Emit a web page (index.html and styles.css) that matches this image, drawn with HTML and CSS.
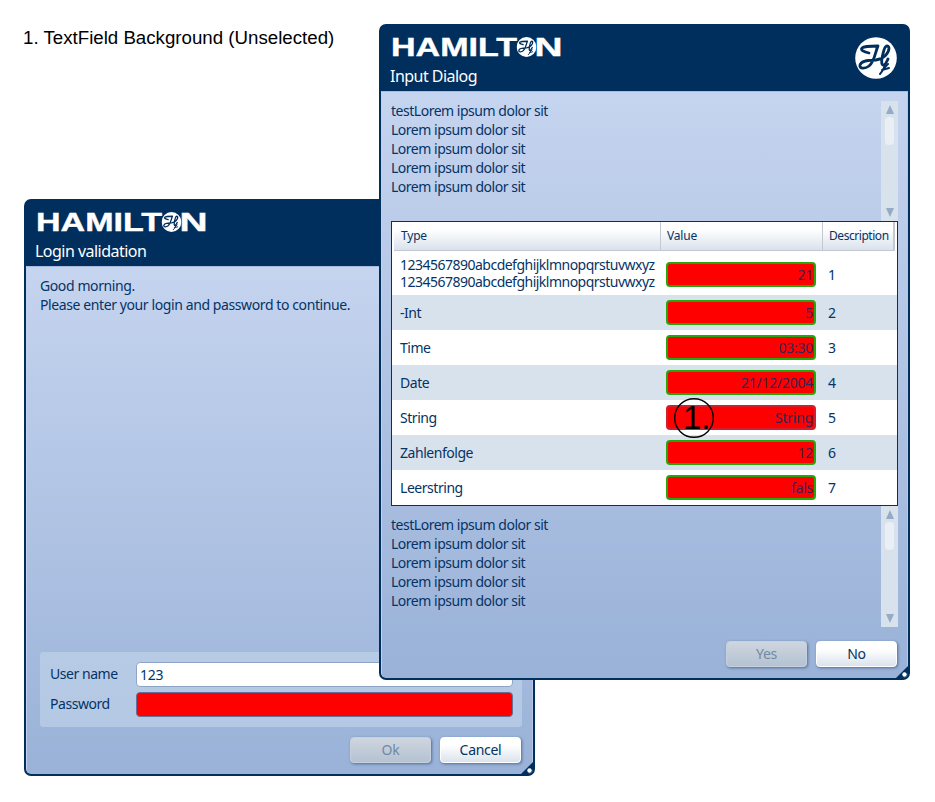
FILE: index.html
```html
<!DOCTYPE html>
<html lang="en">
<head>
<meta charset="utf-8">
<title>TextField Background</title>
<link rel="stylesheet" href="styles.css">
</head>
<body>
<svg class="defs" width="0" height="0" aria-hidden="true">
  <symbol id="emblem" viewBox="0 0 42 42">
    <circle cx="21" cy="21" r="20.8" fill="#fff"/>
    <g fill="none" stroke="#002e5d" stroke-width="2.8" stroke-linecap="round" stroke-linejoin="round">
      <path d="M14 16C9 15 5 13 7 11C9 9 15 9 23 9C20 15 20 24 14 29C10 32 4 32 5 28C6 24 15 23 21 23C29 22 34 16 34 11C33 7 30 9 29 13C27 20 25 29 29 28C31 27 32 24 33 22"/>
      <path d="M25 37C28 34 29 31 30 28M27 33L34 31M29 31L33 27" stroke-width="2"/>
    </g>
  </symbol>
</svg>
<h1 class="caption">1. TextField Background (Unselected)</h1>

<section class="dialog login">
  <header class="head">
    <svg class="logo" width="172" height="20" viewBox="0 0 172 20">
      <text x="-1" y="18.500" textLength="126" lengthAdjust="spacingAndGlyphs">HAMILT</text>
      <use href="#emblem" x="124.500" y="0" width="20" height="20"/>
      <text x="142.500" y="18.500" textLength="28" lengthAdjust="spacingAndGlyphs">N</text>
    </svg>
    <h2 class="title">Login validation</h2>
  </header>
  <div class="body">
    <p class="message m-login">Good morning.<br>Please enter your login and password to continue.</p>
    <form class="panel">
      <label class="field"><span>User name</span><span class="box">123</span></label>
      <label class="field"><span>Password</span><span class="box red"></span></label>
    </form>
    <div class="actions"><span class="btn off">Ok</span><span class="btn">Cancel</span></div>
  </div>
  <svg class="grip" width="16" height="16"><path d="M16 0V16H0Z"/><circle cx="10.500" cy="10.500" r="2.200"/></svg>
</section>

<section class="dialog input">
  <header class="head">
    <svg class="logo" width="172" height="20" viewBox="0 0 172 20">
      <text x="-1" y="18.500" textLength="126" lengthAdjust="spacingAndGlyphs">HAMILT</text>
      <use href="#emblem" x="124.500" y="0" width="20" height="20"/>
      <text x="142.500" y="18.500" textLength="28" lengthAdjust="spacingAndGlyphs">N</text>
    </svg>
    <h2 class="title">Input Dialog</h2>
    <svg class="seal" width="42" height="42"><use href="#emblem" width="42" height="42"/></svg>
  </header>
  <div class="body">
    <div class="scroll">
      <p class="message">testLorem ipsum dolor sit<br>Lorem ipsum dolor sit<br>Lorem ipsum dolor sit<br>Lorem ipsum dolor sit<br>Lorem ipsum dolor sit</p>
      <div class="bar"><i class="up"></i><i class="thumb"></i><i class="down"></i></div>
    </div>
    <div class="table">
      <div class="row hrow"><span>Type</span><span>Value</span><span>Description</span></div>
      <div class="row tall"><span class="long">1234567890abcdefghijklmnopqrstuvwxyz<br>1234567890abcdefghijklmnopqrstuvwxyz</span><span class="val">21</span><span>1</span></div>
      <div class="row"><span>-Int</span><span class="val">5</span><span>2</span></div>
      <div class="row"><span>Time</span><span class="val">03:30</span><span>3</span></div>
      <div class="row"><span>Date</span><span class="val">21/12/2004</span><span>4</span></div>
      <div class="row"><span>String</span><span class="val bad">String</span><span>5</span></div>
      <div class="row"><span>Zahlenfolge</span><span class="val">12</span><span>6</span></div>
      <div class="row"><span>Leerstring</span><span class="val">fals</span><span>7</span></div>
    </div>
    <div class="scroll lower">
      <p class="message">testLorem ipsum dolor sit<br>Lorem ipsum dolor sit<br>Lorem ipsum dolor sit<br>Lorem ipsum dolor sit<br>Lorem ipsum dolor sit</p>
      <div class="bar"><i class="up"></i><i class="thumb"></i><i class="down"></i></div>
    </div>
    <div class="actions"><span class="btn off">Yes</span><span class="btn">No</span></div>
  </div>
  <svg class="grip" width="16" height="16"><path d="M16 0V16H0Z"/><circle cx="10.500" cy="10.500" r="2.200"/></svg>
</section>
<svg class="marker" width="42" height="42"><circle cx="21" cy="21" r="19.300"/><text x="10" y="32">1.</text></svg>
</body>
</html>
```
FILE: styles.css
```css
* { box-sizing: border-box; }
body {
  margin: 0;
  width: 935px;
  height: 802px;
  position: relative;
  overflow: hidden;
  background: #fff;
  color: #053365;
  font: 14px/19px "Noto Sans", sans-serif;
  letter-spacing: -.46px;
}
h1, h2, p { margin: 0; font-weight: 400; }
.defs { position: absolute; }
.caption {
  padding: 26px 0 0 23px;
  color: #000;
  font: 18.7px/23px "Liberation Sans", Arial, sans-serif;
  letter-spacing: 0;
  white-space: nowrap;
}
.dialog {
  position: absolute;
  display: flex;
  flex-direction: column;
  border: 2px solid #002e5d;
  border-radius: 7px;
  background: #002e5d;
  overflow: hidden;
}
.login { left: 24px; top: 199px; width: 511px; height: 577px; }
.input { left: 379px; top: 24px; width: 531px; height: 656px; }
.head { position: relative; height: 65px; padding: 11px 0 0 11px; flex: none; }
.login .head { padding-left: 11px; }
.logo { display: block; margin-bottom: 8px; overflow: visible; letter-spacing: 0; }
.logo text { font: 700 26px "Liberation Sans", Arial, sans-serif; fill: #fff; stroke: #fff; stroke-width: .4px; }
.title { color: #fff; font-size: 16px; line-height: 22px; margin-left: -2px; letter-spacing: -.53px; }
.seal { position: absolute; right: 11px; top: 11px; }
.body {
  flex: 1;
  display: flex;
  flex-direction: column;
  padding: 10px 10px 11px;
  border-top: 1px solid #a9badb;
  border-left: 1px solid #c4d1ec;
  border-right: 1px solid #b7c7e4;
  background: linear-gradient(#c5d4ef, #9ab2d8);
  border-radius: 0 0 4px 4px;
}
.input .body { padding: 9px 9px 11px 9px; }
.message { white-space: nowrap; margin-top: -.5px; letter-spacing: -.48px; }
.m-login { padding: 0 0 0 3px; margin-top: -1.500px; letter-spacing: -.4px; }
.panel {
  margin: auto 0 10px 3px;
  width: 482px;
  height: 75px;
  padding: 10px 9px 0 10px;
  background: rgba(201, 220, 237, .5);
  border-radius: 3px;
}
.field { display: flex; justify-content: space-between; height: 25px; margin-bottom: 5px; line-height: 24px; }
.box {
  width: 377px;
  padding-left: 3px;
  background: #fff;
  border: 1px solid #8fa5c8;
  border-radius: 4px;
  letter-spacing: -.2px;
}
.box.red { background: #f00; border-color: #63719b; }
.actions { display: flex; gap: 9px; justify-content: flex-end; }
.login .actions { padding-right: 1px; }
.input .actions { margin-top: auto; padding-right: 1px; }
.btn {
  width: 81px;
  height: 26px;
  border: 1px solid #fff;
  border-radius: 4px;
  background: linear-gradient(#fff 30%, #dbe3ed);
  box-shadow: 1px 1px 3px #536c92;
  text-align: center;
  line-height: 24px;
  letter-spacing: -.3px;
}
.btn.off { background: linear-gradient(#ced6df, #b4c2d2); border-color: #c7d1de; color: #7289a5; }
.grip { position: absolute; right: -2px; bottom: -2px; }
.grip path { fill: #002e5d; }
.grip circle { fill: #fff; }
.scroll { display: flex; justify-content: space-between; height: 120px; }
.scroll.lower { height: 121px; }
.lower .message { margin-top: 9px; }
.bar {
  width: 17px;
  background: #d8e2ec;
  display: flex;
  flex-direction: column;
  align-items: center;
  padding: 4px 0;
}
.up, .down { border: 4.500px solid transparent; border-top: 0; border-bottom: 9px solid #94abc5; }
.down { border-top: 9px solid #94abc5; border-bottom: 0; margin-top: auto; }
.thumb { width: 9px; height: 28px; margin-top: 3px; border-radius: 4px; background: #e9eff5; }
.table { border: 1px solid #063261; background: #fff; height: 285px; width: 507px; }
.row { display: grid; grid-template-columns: 274px 150px 1fr; height: 35px; align-items: center; }
.row > span:first-child { padding-left: 8px; }
.row > span:last-child { padding-left: 12px; }
.row:nth-child(odd) { background: #d8e2ec; }
.row.hrow {
  grid-template-columns: 267px 162px 71px 1fr;
  height: 29px;
  margin: 0 2px;
  align-items: stretch;
  line-height: 28px;
  font-size: 12px;
  letter-spacing: -.2px;
  background: linear-gradient(#fff 25%, #d9e2eb);
  border-bottom: 1px solid #c3c8d1;
  border-right: 1px solid #c5c9cf;
}
.row.hrow > span { padding-left: 6px; border-right: 1px solid #c5c9cf; }
.row.hrow > span:first-child { padding-left: 7px; }
.row.hrow > span:last-child { letter-spacing: -.45px; }
.row.tall { height: 44px; }
.row.tall .val, .row.tall > span:last-child { position: relative; top: 1px; }
.row .long { line-height: 17px; letter-spacing: -.51px; }
.row .val {
  height: 25px;
  padding-right: 1px;
  border: 2px solid #27a50b;
  border-radius: 4px;
  background: #f00;
  text-align: right;
  line-height: 22px;
  color: #342553;
  letter-spacing: -.25px;
}
.row .val.bad { border-color: #d31e30; }
.marker { position: absolute; left: 672.500px; top: 397px; letter-spacing: 0; }
.marker circle { fill: none; stroke: #000; stroke-width: 1.400; }
.marker text { font: 33px "Liberation Sans", Arial, sans-serif; }
```
